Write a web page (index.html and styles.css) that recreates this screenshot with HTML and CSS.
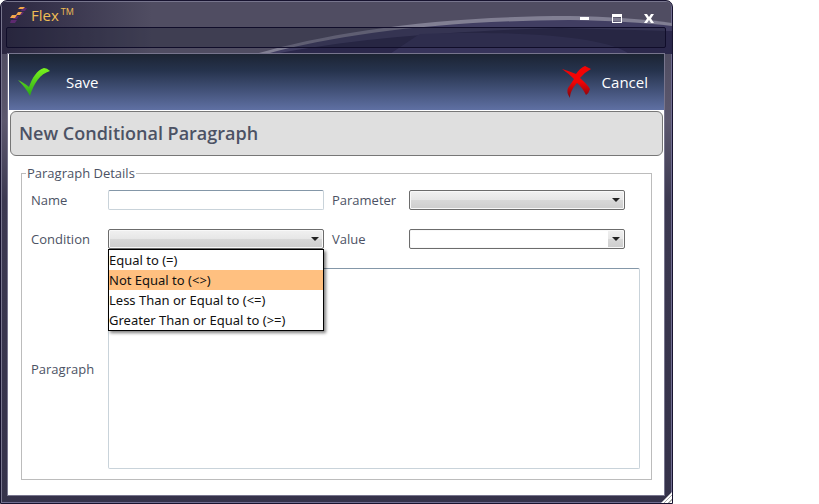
FILE: index.html
```html
<!DOCTYPE html>
<html lang="en">
<head>
  <meta charset="UTF-8" />
  <meta name="viewport" content="width=device-width, initial-scale=1.0" />
  <title>Flex</title>
  <link rel="stylesheet" href="styles.css">
</head>
<body>

  <div class="window">
    <svg class="swoosh" viewBox="0 0 673 53" preserveAspectRatio="none" aria-hidden="true">
      <path d="M255 53C330 31 440 15 570 15Q630 16 673 22V53Z" fill="#817f93"/>
      <path d="M266 53C340 33 440 20 570 19Q630 20 673 25V53Z" fill="#413e62"/>
      <path d="M274 53C350 38 450 30 560 27L673 30V53Z" fill="#2b284b"/>
      <path d="M390 53L420 33C520 29 610 36 630 53Z" fill="#37345a"/>
    </svg>

    <header class="titlebar">
      <svg class="logo" width="18" height="18" viewBox="0 0 18 18" aria-hidden="true">
        <g fill="#5d2a70">
          <path d="M13 2h5l-2 3h-4zM10 6h5l-2 3H9zM5 10h5l-2 3H4zM2 14h6l-2 3H1z"/>
        </g>
        <g fill="#f3a64b">
          <path d="M11 1h5l-2 2h-5zM9 6h4l-2 3H7zM3 9h5l-2 3H1z"/>
        </g>
      </svg>
      <h1>Flex<sup>TM</sup></h1>
      <div class="controls">
        <button type="button" aria-label="Minimize">
          <svg width="12" height="12" viewBox="0 0 12 12"><path d="M1 5h9v3H1z" fill="#fff"/></svg>
        </button>
        <button type="button" aria-label="Maximize">
          <svg width="12" height="12" viewBox="0 0 12 12"><path fill-rule="evenodd" d="M1 2h10v9H1zM2 5v5h8V5z" fill="#fff"/></svg>
        </button>
        <button type="button" aria-label="Close">
          <svg width="12" height="12" viewBox="0 0 12 12"><path d="M1 2h3l2 3 2-3h3L8 6.500l3 4.500H8L6 8l-2 3H1l3-4.500z" fill="#fff"/></svg>
        </button>
      </div>
    </header>

    <div class="menu-strip"></div>

    <main>
      <div class="toolbar">
        <button type="button">
          <svg width="34" height="32" viewBox="0 0 34 32" aria-hidden="true">
            <defs>
              <linearGradient id="green" x1="0" y1="0" x2="0" y2="1">
                <stop offset="0" stop-color="#7bf51d"/>
                <stop offset="1" stop-color="#2aa719"/>
              </linearGradient>
            </defs>
            <path d="M0 14C4 16 8 18 11 21C14 12 19 4 26 2Q29 2 32 5C22 8 16 17 12 30Q8 22 0 14Z" fill="url(#green)"/>
          </svg>
          Save
        </button>
        <button type="button">
          <svg width="30" height="34" viewBox="0 0 30 34" aria-hidden="true">
            <defs>
              <linearGradient id="red" x1="0" y1="0" x2="0" y2="1">
                <stop offset="0.500" stop-color="#f30404"/>
                <stop offset="1" stop-color="#790710"/>
              </linearGradient>
            </defs>
            <path d="M0 4Q7 6 14 9Q18 3 23 1L29 4Q23 7 18 13C22 17 26 20 28 24Q27 28 24 30Q20 22 15 18C10 23 8 29 8 33Q4 27 6 23L12 14Q6 8 0 4Z" fill="url(#red)"/>
          </svg>
          Cancel
        </button>
      </div>

      <h2>New Conditional Paragraph</h2>

      <form>
        <fieldset>
          <legend>Paragraph Details</legend>
          <div class="fields">
            <label for="name">Name</label>
            <input type="text" id="name">

            <label for="parameter" class="second">Parameter</label>
            <div class="combo">
              <select id="parameter"></select>
            </div>

            <label for="condition">Condition</label>
            <div class="combo">
              <select id="condition"></select>
              <ul class="options" role="listbox" aria-label="Condition">
                <li role="option">Equal to (=)</li>
                <li role="option" class="active" aria-selected="true">Not Equal to (&lt;&gt;)</li>
                <li role="option">Less Than or Equal to (&lt;=)</li>
                <li role="option">Greater Than or Equal to (&gt;=)</li>
              </ul>
            </div>

            <label for="value" class="second">Value</label>
            <div class="combo editable">
              <select id="value"></select>
            </div>

            <label for="paragraph">Paragraph</label>
            <textarea id="paragraph"></textarea>
          </div>
        </fieldset>
      </form>
    </main>

    <div class="grip"></div>
  </div>

</body>
</html>
```
FILE: styles.css
```css
* {
  box-sizing: border-box;
}

body {
  margin: 0;
  background: #fff;
  font-family: "Open Sans", "Noto Sans", sans-serif;
  font-size: 13px;
  line-height: 18px;
  color: #4c5264;
}

button, input, select, textarea {
  font: inherit;
  color: inherit;
}

/* window frame */
.window {
  position: relative;
  display: flex;
  flex-direction: column;
  min-height: 100vh;
  margin-right: 146px;
  padding: 1px 6px 7px 5px;
  background: linear-gradient(#504d62 0, #504d62 52px, #5c586e 120px, #3c3951 200px, #35324a 100%);
  border: 1px solid #17132f;
  border-radius: 7px 7px 0 0;
  box-shadow: inset 1px 1px #77758d, inset -1px -1px #716e91;
  overflow: hidden;
}

.window::before {
  content: "";
  position: absolute;
  top: 1px;
  left: 1px;
  width: 150px;
  height: 52px;
  background: linear-gradient(90deg, #2b2741, #504d6200);
}

.swoosh {
  position: absolute;
  top: 0;
  left: 0;
  width: 100%;
  height: 53px;
}

.titlebar {
  position: relative;
  display: flex;
  align-items: center;
  height: 25px;
  padding: 0 11px 0 3px;
}

.titlebar h1 {
  flex: 1;
  margin: 0 0 0 4px;
  font-size: 15px;
  font-weight: 400;
  color: #f0bd55;
}

.titlebar sup {
  margin-left: 2px;
  font-size: 9px;
  line-height: 1;
}

.controls {
  display: flex;
  gap: 20px;
  padding-top: 7px;
}

.controls button {
  display: flex;
  padding: 0;
  background: none;
  border: none;
}

.menu-strip {
  position: relative;
  height: 21px;
  margin-bottom: 5px;
  background: rgba(32, 35, 55, 0.35);
  border: 1px solid #100d2a;
  border-radius: 2px;
}

main {
  position: relative;
  flex: 1;
  margin: 0 1px;
  padding-left: 1px;
  background: #fff;
  border: 1px solid #77758d;
}

.toolbar {
  display: flex;
  justify-content: space-between;
  height: 56px;
  padding: 0 16px 0 9px;
  background: linear-gradient(#1c2433, #26334d 30%, #5f70a3);
}

.toolbar button {
  display: flex;
  align-items: center;
  gap: 14px;
  padding: 0;
  background: none;
  border: none;
  color: #fff;
  font-size: 15px;
}

.toolbar button + button {
  gap: 10px;
}

h2 {
  margin: 1px 1px 0;
  padding: 0 8px;
  background: #dfdfdf;
  border: 1px solid #777;
  border-radius: 6px;
  font-size: 18px;
  font-weight: 600;
  line-height: 43px;
}

/* form */
form {
  padding: 8px 12px 14px;
}

fieldset {
  min-width: 0;
  margin: 0;
  padding: 8px 11px 10px 9px;
  border: 1px solid #bcbcbc;
}

legend {
  margin-left: -5px;
  padding: 0 1px;
}

.fields {
  display: grid;
  grid-template-columns: 77px 1fr 85px 1fr 15px;
  row-gap: 19px;
  align-items: center;
}

.fields label {
  grid-column: 1;
}

.fields .second {
  grid-column: 3;
  padding-left: 8px;
}

input, textarea {
  width: 100%;
  margin: 0;
  background: #fff;
  border: 1px solid #c9d3da;
  border-top-color: #8497a8;
  border-radius: 2px;
}

input {
  height: 20px;
}

textarea {
  grid-column: 2 / -1;
  height: 201px;
  display: block;
  resize: none;
}

.combo {
  position: relative;
}

.combo select {
  display: block;
  width: 100%;
  height: 20px;
  appearance: none;
  background: linear-gradient(#f1f1f1, #e6e6e6 50%, #d8d8d8 50%, #cdcdcd);
  border: 1px solid #6c6c6c;
  border-radius: 2px;
  box-shadow: inset 0 0 0 1px #f8f8f8;
}

.combo::after {
  content: "";
  position: absolute;
  top: 8px;
  right: 5px;
  border: 4px solid transparent;
  border-top-color: #222;
  border-bottom: none;
  pointer-events: none;
}

.editable select {
  background: linear-gradient(#f1f1f1, #e6e6e6 50%, #d8d8d8 50%, #cdcdcd) right / 16px 100% no-repeat #fff;
}

.options {
  position: absolute;
  top: 100%;
  left: 0;
  z-index: 1;
  width: 100%;
  margin: 0;
  padding: 0;
  list-style: none;
  background: #fff;
  border: 1px solid #000;
  box-shadow: 2px 2px 3px rgba(0, 0, 0, 0.5);
  font-family: "Noto Sans", "Open Sans", sans-serif;
  color: #111;
  line-height: 20px;
  white-space: nowrap;
}

.options .active {
  background: #ffc080;
}

.grip {
  position: absolute;
  right: -1px;
  bottom: -1px;
  width: 13px;
  height: 13px;
  background: repeating-linear-gradient(135deg, #fff 0, #fff 2px, #aaa 2px, #aaa 3px);
  clip-path: polygon(100% 0, 100% 100%, 0 100%);
}
```
